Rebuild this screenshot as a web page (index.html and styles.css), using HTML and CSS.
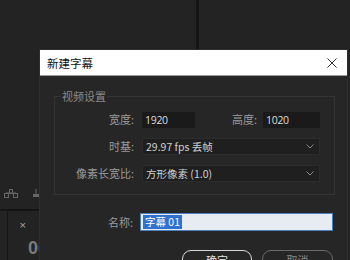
FILE: index.html
```html
<!DOCTYPE html>
<html>
<head>
<meta charset="utf-8">
<link rel="stylesheet" href="styles.css">
</head>
<body>
<div class="vline"></div>
<div class="bgpanel">
  <div class="bg-icons">
    <svg width="14" height="9" viewBox="0 0 14 9"><rect x="0.5" y="4.5" width="4" height="4" fill="none" stroke="#666"/><rect x="5.5" y="0.5" width="3" height="4" fill="none" stroke="#666"/><rect x="9.5" y="4.5" width="4" height="4" fill="none" stroke="#666"/><line x1="2" y1="4" x2="12" y2="4" stroke="#666"/></svg>
    <svg width="8" height="9" viewBox="0 0 8 9"><rect x="1" y="5" width="6" height="3" fill="#666"/><line x1="4" y1="0" x2="4" y2="5" stroke="#666"/></svg>
  </div>
  <div class="bg-hline"></div>
  <div class="bg-vline"></div>
  <div class="bg-x">×</div>
  <div class="bg-num">00</div>
</div>

<div class="dialog">
  <div class="titlebar">
    <span class="title">新建字幕</span>
    <svg class="close" width="10" height="10" viewBox="0 0 10 10"><path d="M0.5 0.5 L9.5 9.5 M9.5 0.5 L0.5 9.5" stroke="#333" stroke-width="1"/></svg>
  </div>
  <div class="body">
    <fieldset class="group">
      <legend>视频设置</legend>
      <div class="row">
        <span class="label">宽度:</span>
        <div class="pair">
          <div class="field w-small">1920</div>
          <span class="label label-inline">高度:</span>
          <div class="field w-small2">1020</div>
        </div>
      </div>
      <div class="row">
        <span class="label">时基:</span>
        <div class="select"><span>29.97 fps 丢帧</span><svg width="8" height="5" viewBox="0 0 8 5"><path d="M0.5 0.5 L4 4 L7.5 0.5" fill="none" stroke="#888"/></svg></div>
      </div>
      <div class="row">
        <span class="label">像素长宽比:</span>
        <div class="select"><span>方形像素 (1.0)</span><svg width="8" height="5" viewBox="0 0 8 5"><path d="M0.5 0.5 L4 4 L7.5 0.5" fill="none" stroke="#888"/></svg></div>
      </div>
    </fieldset>
    <div class="namerow">
      <span class="label">名称:</span>
      <div class="nameinput"><span class="sel">字幕 01</span></div>
    </div>
    <div class="buttons">
      <div class="btn primary">确定</div>
      <div class="btn">取消</div>
    </div>
  </div>
</div>
</body>
</html>
```
FILE: styles.css
```css
html, body {
  margin: 0;
  padding: 0;
}
body {
  width: 350px;
  height: 260px;
  background: #232323;
  position: relative;
  overflow: hidden;
  font-family: "Noto Sans CJK SC", "Noto Sans", sans-serif;
  font-size: 11px;
}
.vline {
  position: absolute;
  left: 196px;
  top: 0;
  width: 3px;
  height: 50px;
  background: #141414;
}
.bgpanel {
  position: absolute;
  left: 0;
  top: 180px;
  width: 40px;
  height: 80px;
}
.bg-icons {
  position: absolute;
  left: 4px;
  top: 9px;
  width: 36px;
  display: flex;
  justify-content: space-between;
}
.bg-hline {
  position: absolute;
  left: 0;
  top: 29px;
  width: 40px;
  height: 2px;
  background: #151515;
}
.bg-vline {
  position: absolute;
  left: 7px;
  top: 31px;
  width: 1px;
  height: 50px;
  background: #151515;
}
.bg-x {
  position: absolute;
  left: 19px;
  top: 40px;
  color: #aaa;
  font-size: 9px;
  font-family: "DejaVu Sans", sans-serif;
}
.bg-num {
  position: absolute;
  left: 28px;
  top: 58px;
  color: #7a7a7a;
  font-size: 18px;
  font-weight: bold;
  font-family: "Liberation Sans", sans-serif;
}
.dialog {
  position: absolute;
  left: 40px;
  top: 50px;
  width: 307px;
  height: 230px;
  background: #262626;
  box-shadow: 0 0 0 1px #2e2e2e;
}
.titlebar {
  height: 26px;
  background: #fff;
  border-bottom: 1px solid #9a9a9a;
  box-sizing: border-box;
  display: flex;
  align-items: center;
  justify-content: space-between;
  padding: 0 10px 0 7px;
}
.title {
  color: #111;
  font-size: 11.5px;
}
.body {
  padding: 13px 12px 0 14px;
}
.group {
  margin: 0;
  border: 1px solid #353535;
  padding: 7px 14px 12px 0;
  display: flex;
  flex-direction: column;
  gap: 10px;
}
.group legend {
  color: #8a8a8a;
  font-size: 11px;
  padding: 0 1px;
  margin-left: 6px;
  line-height: 15px;
  height: 15px;
}
.row {
  display: grid;
  grid-template-columns: 79px 1fr;
  column-gap: 8px;
  align-items: center;
  height: 17px;
}
.label {
  color: #9a9a9a;
  text-align: right;
  font-size: 11px;
  line-height: 15px;
  height: 15px;
}
.pair {
  display: flex;
  align-items: center;
}
.field {
  background: #1a1a1a;
  color: #dcdcdc;
  height: 16px;
  line-height: 16px;
  font-size: 10.5px;
  padding-left: 3px;
  box-sizing: border-box;
  font-family: "Open Sans", sans-serif;
  letter-spacing: -0.3px;
}
.w-small {
  width: 53px;
}
.label-inline {
  width: 68px;
  padding-right: 6px;
  box-sizing: border-box;
}
.w-small2 {
  width: 57px;
}
.select {
  height: 17px;
  background: #1f1f1f;
  border: 1px solid #2c2c2c;
  box-sizing: border-box;
  display: flex;
  align-items: center;
  justify-content: space-between;
  padding: 0 5px 0 3px;
  color: #d0d0d0;
  font-size: 10.5px;
}
.namerow {
  margin-top: 18px;
  display: grid;
  grid-template-columns: 79px 193px;
  column-gap: 7px;
  align-items: center;
  height: 18px;
}
.nameinput {
  height: 18px;
  background: #e6ecf2;
  border: 1px solid #4a7fc0;
  box-sizing: border-box;
  display: flex;
  align-items: center;
  padding-left: 2px;
}
.sel {
  background: #2f70d0;
  color: #fff;
  font-size: 10.5px;
  line-height: 14px;
  height: 14px;
  padding: 0 2px;
  width: 35px;
}
.buttons {
  margin-top: 19px;
  display: flex;
  gap: 10px;
  padding-left: 128px;
}
.btn {
  width: 71px;
  height: 22px;
  box-sizing: border-box;
  border: 1.5px solid #6a6a6a;
  border-radius: 9px;
  color: #8c8c8c;
  text-align: center;
  line-height: 19px;
  font-size: 11px;
}
.btn.primary {
  border-color: #d8d8d8;
  color: #e6e6e6;
  width: 70px;
}
```
